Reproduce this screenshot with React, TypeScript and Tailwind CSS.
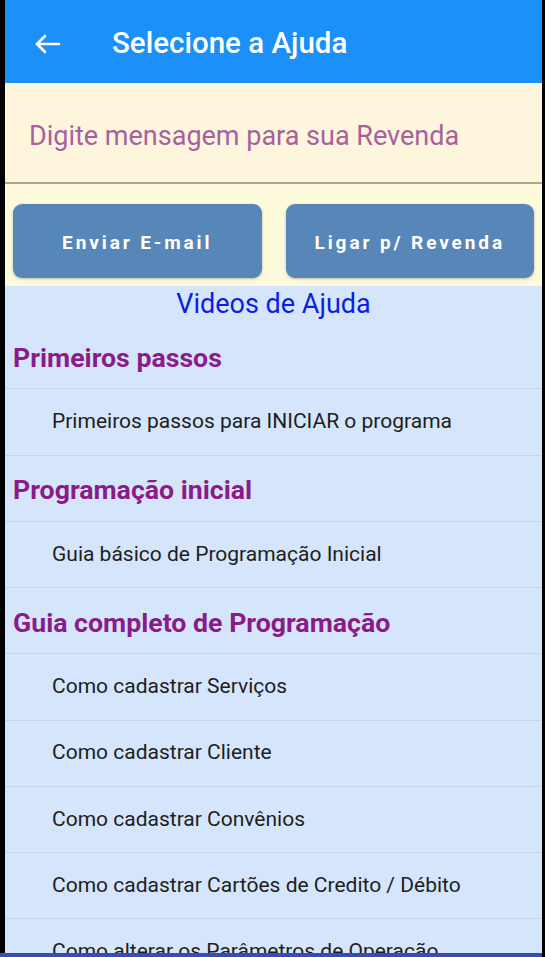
import React from 'react';

const SECTIONS: { title: string; items: string[] }[] = [
  { title: 'Primeiros passos', items: ['Primeiros passos para INICIAR o programa'] },
  { title: 'Programação inicial', items: ['Guia básico de Programação Inicial'] },
  {
    title: 'Guia completo de Programação',
    items: [
      'Como cadastrar Serviços',
      'Como cadastrar Cliente',
      'Como cadastrar Convênios',
      'Como cadastrar Cartões de Credito / Débito',
      'Como alterar os Parâmetros de Operação',
      'Como cadastrar Funcionários',
    ],
  },
];

function BackArrow() {
  return (
    <svg width="28" height="22" viewBox="0 0 28 22" fill="none" stroke="white" strokeWidth="2.6" strokeLinecap="round" strokeLinejoin="round">
      <path d="M25 11H3" />
      <path d="M11 3L3 11L11 19" />
    </svg>
  );
}

export default function App() {
  return (
    <div className="relative h-[957px] w-full overflow-hidden bg-black" style={{ fontFamily: 'Roboto, "Noto Sans", sans-serif' }}>
      <div className="ml-[5px] mr-[3px] flex h-full flex-col bg-[#d5e5fb]">
        {/* toolbar */}
        <div className="flex h-[83px] shrink-0 items-center bg-[#1a90f8] pl-[29px] pt-1">
          <BackArrow />
          <h1 className="ml-[50px] text-[29.5px] font-medium text-white">Selecione a Ajuda</h1>
        </div>

        {/* message + actions */}
        <div className="shrink-0 bg-[#fdf6dc]">
          <div className="flex h-[101px] items-center border-b-2 border-[#aaa496] pl-[24px] pt-2 text-[27px] text-[#a8609f]">
            Digite mensagem para sua Revenda
          </div>
          <div className="grid grid-cols-2 gap-6 bg-[#fefadc] px-2 pt-[20px] pb-[8px]">
            <button className="h-[74px] rounded-[9px] bg-[#5787b8] pt-1 text-[19px] font-bold tracking-[2.9px] text-white shadow-[0_1px_3px_rgba(0,0,0,0.25)]">
              Enviar E-mail
            </button>
            <button className="h-[74px] rounded-[9px] bg-[#5787b8] pt-1 text-[19px] font-bold tracking-[2.9px] text-white shadow-[0_1px_3px_rgba(0,0,0,0.25)]">
              Ligar p/ Revenda
            </button>
          </div>
        </div>

        {/* videos list */}
        <div className="flex h-[37px] shrink-0 items-center justify-center text-[27px] text-[#0b1ee6]">Videos de Ajuda</div>
        <div className="flex-1">
          {SECTIONS.map((s) => (
            <div key={s.title}>
              <div className="flex h-[66.25px] items-center border-b border-[#c6d4e8] pl-2 pt-1 text-[26.7px] font-bold text-[#8b1b88]">
                {s.title}
              </div>
              {s.items.map((it) => (
                <div key={it} className="flex h-[66.25px] items-center border-b border-[#c6d4e8] pl-[47px] text-[21px] text-[#1e1e1e]">
                  {it}
                </div>
              ))}
            </div>
          ))}
        </div>
      </div>
      <div className="absolute bottom-0 left-0 right-[3px] h-[4px] bg-[#3b4bb5]" />
    </div>
  );
}
